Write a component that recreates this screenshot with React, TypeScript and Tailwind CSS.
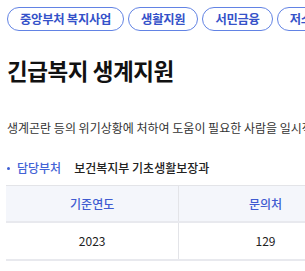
export default function App() {
  const chips = ['중앙부처 복지사업', '생활지원', '서민금융', '저소득층'];

  return (
    <div className="w-[305px] h-[271px] overflow-hidden bg-white font-['Noto_Sans_CJK_KR',sans-serif] text-[#222]">
      {/* Category chips */}
      <div className="flex gap-[4px] pl-[7px] pt-[7px] whitespace-nowrap">
        {chips.map((c) => (
          <span
            key={c}
            className="shrink-0 h-[24px] flex items-center px-[12px] rounded-full border-[1.5px] border-[#6283e4] text-[#3552c9] text-[12.3px] font-bold tracking-[-0.02em]"
          >
            {c}
          </span>
        ))}
      </div>

      {/* Title */}
      <h1 className="mt-[25px] pl-[7px] text-[22.5px] leading-[28px] font-bold text-[#111] tracking-[-0.02em]">
        긴급복지 생계지원
      </h1>

      {/* Description */}
      <p className="mt-[36px] pl-[7px] text-[12px] leading-[16px] text-[#333] whitespace-nowrap">
        생계곤란 등의 위기상황에 처하여 도움이 필요한 사람을 일시적으로 신속하게 지원합니다.
      </p>

      {/* Department */}
      <div className="mt-[24px] pl-[7px] flex items-center text-[12px] leading-[16px]">
        <span className="w-[3px] h-[3px] rounded-full bg-[#3f5fd3] mr-[7px]" />
        <span className="text-[#4363d6] font-medium">담당부처</span>
        <span className="ml-[13px] text-[#222] font-medium">보건복지부 기초생활보장과</span>
      </div>

      {/* Info table */}
      <div className="mt-[9px] ml-[6px] w-[520px] border-t border-[#e3e4e8]">
        <div className="grid grid-cols-3 bg-[#f4f6fb] h-[37px] text-[12px] font-medium text-[#3f5bd1] border-b-2 border-[#e8e9ee]">
          <div className="flex items-center justify-center border-r border-[#e3e4e8]">기준연도</div>
          <div className="flex items-center justify-center border-r border-[#e3e4e8]">문의처</div>
          <div className="flex items-center justify-center">신청방법</div>
        </div>
        <div className="grid grid-cols-3 h-[38px] text-[12px] text-[#222] border-b-2 border-[#e8e9ee]">
          <div className="flex items-center justify-center border-r border-[#e3e4e8]">2023</div>
          <div className="flex items-center justify-center border-r border-[#e3e4e8]">129</div>
          <div className="flex items-center justify-center">방문</div>
        </div>
      </div>
    </div>
  );
}
